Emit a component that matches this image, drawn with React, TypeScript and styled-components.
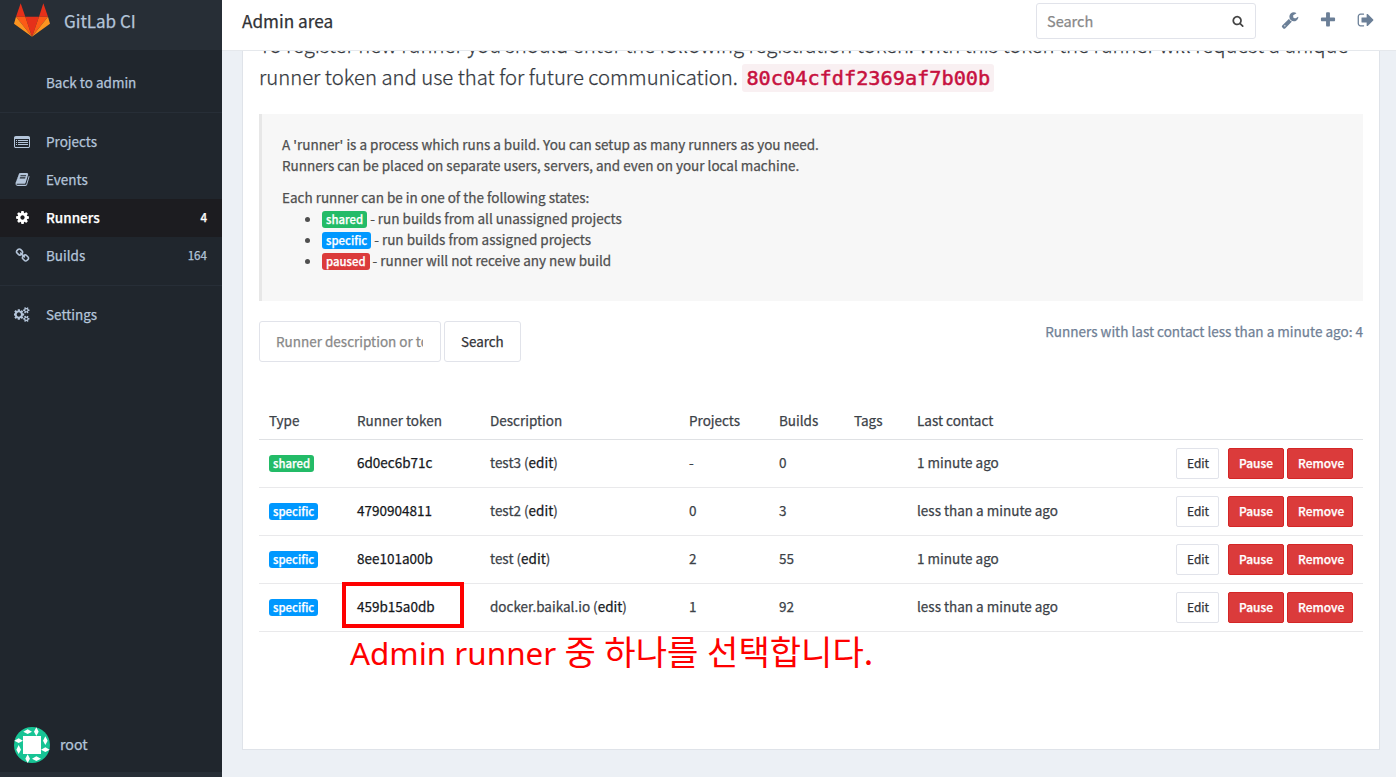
import React from 'react';
import styled, { createGlobalStyle, css } from 'styled-components';

const sans = `'Noto Sans CJK KR', 'Noto Sans', sans-serif`;

const GlobalStyle = createGlobalStyle`
  *, *::before, *::after { box-sizing: border-box; }
  html, body { margin: 0; padding: 0; }
  body {
    background: #ecf0f5;
    color: #3c4248;
    font-family: ${sans};
    font-size: 13.5px;
    line-height: 21px;
    -webkit-text-stroke-width: 0.25px;
    overflow: hidden;
  }
  a { color: inherit; text-decoration: none; }
`;

const Page = styled.div`
  display: flex;
  position: relative;
  width: 1396px;
  height: 777px;
  overflow: hidden;
`;

/* ---------- sidebar ---------- */

const Sidebar = styled.aside`
  display: flex;
  flex-direction: column;
  flex: none;
  width: 222px;
  height: 777px;
  background: #20262d;
  color: #b4c5da;
`;

const Brand = styled.a`
  display: flex;
  align-items: flex-start;
  height: 50px;
  padding: 3px 14px 0;
  gap: 14px;
  background: #272e36;
  font-size: 17px;
  line-height: 36px;
`;

const Menu = styled.ul`
  flex: 1;
  margin: 0;
  padding: 14px 0 0;
  list-style: none;
`;

const MenuLink = styled.a<{ $active?: boolean }>`
  display: flex;
  align-items: center;
  height: 38px;
  padding: 0 15px 0 13px;
  ${(p) =>
    p.$active &&
    css`
      background: #1c1c20;
      color: #fff;
      font-weight: 500;
    `}
`;

const MenuIcon = styled.span`
  display: flex;
  justify-content: center;
  flex: none;
  width: 18px;
  margin-right: 15px;
  padding-bottom: 1px;
`;

const MenuText = styled.span`
  padding-bottom: 2px;
`;

const Count = styled(MenuText)`
  margin-left: auto;
  font-size: 11.6px;
`;

const Separator = styled.li`
  height: 1px;
  margin: 10px 0;
  background: #272e37;
`;

const User = styled.a`
  display: flex;
  align-items: center;
  gap: 10px;
  height: 45px;
  padding: 0 14px 9px;
  font-size: 14.2px;
`;

const CollapseBar = styled.div`
  height: 5px;
  background: #272e36;
`;

/* ---------- main ---------- */

const Main = styled.div`
  flex: 1;
  display: flex;
  flex-direction: column;
  min-width: 0;
`;

const TopBar = styled.header`
  display: flex;
  align-items: flex-start;
  flex: none;
  height: 51px;
  padding: 3px 21px 0 20px;
  background: #fff;
  border-bottom: 1px solid #e5e8ec;
`;

const Title = styled.h1`
  margin: 0;
  font-size: 17.2px;
  line-height: 36px;
  font-weight: 400;
  color: #313236;
`;

const SearchBox = styled.div`
  display: flex;
  align-items: center;
  justify-content: space-between;
  width: 220px;
  height: 36px;
  margin: 0 25px 0 auto;
  padding: 0 11px 1px 10px;
  border: 1px solid #e1e3ea;
  border-radius: 3px;
  color: #888;
  font-size: 14.5px;
`;

const SearchGlyph = styled.span`
  display: flex;
  color: #444;
`;

const TopActions = styled.nav`
  display: flex;
  gap: 20px;
  padding-top: 8px;
  color: #6b7f97;
`;

const Viewport = styled.div`
  flex: 1;
  min-height: 0;
  padding: 0 16px 27px 20px;
  overflow: hidden;
`;

const Card = styled.section`
  display: flow-root;
  height: 699px;
  padding: 0 16px;
  background: #fff;
  border: 1px solid #dfe3e9;
  border-top: 0;
`;

const Lead = styled.p`
  margin: -22px 0 20px;
  font-size: 20.28px;
  line-height: 31.5px;
  font-weight: 300;
  color: #34383e;
  white-space: nowrap;
`;

const LeadLine = styled.span`
  display: block;
`;

const Code = styled.code`
  padding: 2px 4px;
  border-radius: 3px;
  background: #f9f0f2;
  color: #c7113f;
  font-family: 'DejaVu Sans Mono', monospace;
  font-size: 20.25px;
  font-weight: 400;
  -webkit-text-stroke-width: 0.5px;
`;

const Callout = styled.div`
  height: 187px;
  padding: 20px;
  border-left: 3px solid #e7e7e7;
  background: #f7f7f7;
  color: #4f4f4f;
`;

const Paragraph = styled.p`
  margin: 0 0 11px;
`;

const States = styled.ul`
  margin: 0;
  padding-left: 40px;
`;

type Kind = 'shared' | 'specific' | 'paused';
const kindColor: Record<Kind, string> = {
  shared: '#23bb67',
  specific: '#0098ff',
  paused: '#db3b3b',
};

const Label = styled.span<{ $kind: Kind }>`
  display: inline-block;
  height: 17px;
  padding: 0 4px;
  border-radius: 3px;
  background: ${(p) => kindColor[p.$kind]};
  color: #fff;
  font-size: 11.35px;
  font-weight: 500;
  line-height: 16.5px;
`;

const Toolbar = styled.div`
  display: flex;
  align-items: flex-start;
  height: 41px;
  margin: 20px 0 40px;
`;

const FilterInput = styled.input`
  width: 182px;
  height: 41px;
  margin: 0 3px 0 0;
  padding: 0 17px 2px 16px;
  border: 1px solid #e1e3ea;
  border-radius: 3px;
  font: inherit;
  -webkit-text-stroke-width: inherit;
  &::placeholder { color: #888; opacity: 1; }
`;

const Button = styled.button<{ $size?: 'small'; $danger?: boolean }>`
  height: ${(p) => (p.$size ? '31px' : '41px')};
  padding: 0 ${(p) => (p.$size ? '10px 2px' : '16px 2px')};
  border: 1px solid ${(p) => (p.$danger ? '#d42626' : '#e1e3ea')};
  border-radius: ${(p) => (p.$size ? '2px' : '3px')};
  background: ${(p) => (p.$danger ? '#db3b3b' : '#fff')};
  color: ${(p) => (p.$danger ? '#fff' : '#313236')};
  font-family: inherit;
  font-size: ${(p) => (p.$size ? '11.95px' : '13.4px')};
  font-weight: ${(p) => (p.$danger ? 500 : 400)};
  white-space: nowrap;
`;

const Contacted = styled.div`
  margin-left: auto;
  font-size: 13.54px;
  color: #6f8095;
`;

const Table = styled.table`
  width: 1104px;
  table-layout: fixed;
  border-collapse: separate;
  border-spacing: 0;
  th, td {
    padding: 0 10px;
    text-align: left;
    font-weight: 400;
    white-space: nowrap;
    vertical-align: middle;
  }
  th {
    height: 38px;
    border-bottom: 1px solid #dfe1e4;
  }
  td {
    height: 48px;
    padding-bottom: 2px;
    border-bottom: 1px solid #e9e9eb;
  }
  td:last-child { padding-bottom: 0; }
`;

const Token = styled.a`
  color: #15181c;
`;

const RowActions = styled.div`
  display: grid;
  grid-template-columns: 49px 56px 66px;
  column-gap: 3px;
  & > button:first-child { width: 43px; }
`;

/* ---------- annotation over the page ---------- */

const Highlight = styled.div`
  position: absolute;
  left: 342px;
  top: 582px;
  width: 122px;
  height: 46px;
  border: 4px solid #fe0000;
`;

const Note = styled.div`
  position: absolute;
  left: 350px;
  top: 628px;
  color: #fe0000;
  font-family: 'Noto Sans', 'Noto Sans CJK KR', sans-serif;
  font-size: 31.4px;
  line-height: 44px;
  white-space: nowrap;
  -webkit-text-stroke-width: 0;
`;

const NoteKorean = styled.span`
  font-family: 'Noto Sans CJK KR', sans-serif;
  font-size: 34.1px;
  word-spacing: 1px;
`;

/* ---------- icons ---------- */

const glyphs = {
  cog: 'M1152 896q0-106-75-181t-181-75-181 75-75 181 75 181 181 75 181-75 75-181zm512-109v222q0 12-8 23t-20 13l-185 28q-19 54-39 91 35 50 107 138 10 12 10 25t-9 23q-27 37-99 108t-94 71q-12 0-26-9l-138-108q-44 23-91 38-16 136-29 186-7 28-36 28h-222q-14 0-24.5-8.5t-11.5-21.5l-28-184q-49-16-90-37l-141 107q-10 9-25 9-14 0-25-11-126-114-165-168-7-10-7-23 0-12 8-23 15-21 51-66.5t54-70.5q-27-50-41-99l-183-27q-13-2-21-12.5t-8-23.5v-222q0-12 8-23t19-13l186-28q14-46 39-92-40-57-107-138-10-12-10-24 0-10 9-23 26-36 98.5-107.5t94.5-71.5q13 0 26 10l138 107q44-23 91-38 16-136 29-186 7-28 36-28h222q14 0 24.5 8.5t11.5 21.5l28 184q49 16 90 37l142-107q9-9 24-9 13 0 25 10 129 119 165 170 7 8 7 22 0 12-8 23-15 21-51 66.5t-54 70.5q26 50 41 98l183 28q13 2 21 12.5t8 23.5z',
  cogs: 'M832 896q0-106-75-181t-181-75-181 75-75 181 75 181 181 75 181-75 75-181zm768 512q0-52-38-90t-90-38-90 38-38 90q0 53 37.5 90.5t90.5 37.5 90.5-37.5 37.5-90.5zm0-1024q0-52-38-90t-90-38-90 38-38 90q0 53 37.5 90.5t90.5 37.5 90.5-37.5 37.5-90.5zm-384 421v185q0 10-7 19.5t-16 10.5l-155 24q-11 35-32 76 34 48 90 115 7 11 7 20 0 12-7 19-23 30-82.5 89.5t-78.5 59.5q-11 0-21-7l-115-90q-37 19-77 31-11 108-23 155-7 24-30 24h-186q-11 0-20-7.5t-10-17.5l-23-153q-34-10-75-31l-118 89q-7 7-20 7-11 0-21-8-144-133-144-160 0-9 7-19 10-14 41-53t47-61q-23-44-35-82l-152-24q-10-1-17-9.5t-7-19.5v-185q0-10 7-19.5t16-10.5l155-24q11-35 32-76-34-48-90-115-7-11-7-20 0-12 7-20 22-30 82-89t79-59q11 0 21 7l115 90q34-18 77-32 11-108 23-154 7-24 30-24h186q11 0 20 7.5t10 17.5l23 153q34 10 75 31l118-89q8-7 20-7 11 0 21 8 144 133 144 160 0 8-7 19-12 16-42 54t-45 60q23 48 34 82l152 23q10 2 17 10.5t7 19.5zm640 533v140q0 16-149 31-12 27-30 52 51 113 51 138 0 4-4 7-122 71-124 71-8 0-46-47t-52-68q-20 2-30 2t-30-2q-14 21-52 68t-46 47q-2 0-124-71-4-3-4-7 0-25 51-138-18-25-30-52-149-15-149-31v-140q0-16 149-31 13-29 30-52-51-113-51-138 0-4 4-7 4-2 35-20t59-34 30-16q8 0 46 46.5t52 67.5q20-2 30-2t30 2q51-71 92-112l6-2q4 0 124 70 4 3 4 7 0 25-51 138 17 23 30 52 149 15 149 31zm0-1024v140q0 16-149 31-12 27-30 52 51 113 51 138 0 4-4 7-122 71-124 71-8 0-46-47t-52-68q-20 2-30 2t-30-2q-14 21-52 68t-46 47q-2 0-124-71-4-3-4-7 0-25 51-138-18-25-30-52-149-15-149-31v-140q0-16 149-31 13-29 30-52-51-113-51-138 0-4 4-7 4-2 35-20t59-34 30-16q8 0 46 46.5t52 67.5q20-2 30-2t30 2q51-71 92-112l6-2q4 0 124 70 4 3 4 7 0 25-51 138 17 23 30 52 149 15 149 31z',
  wrench:
    'M448 1472q0-26-19-45t-45-19-45 19-19 45 19 45 45 19 45-19 19-45zm644-420l-682 682q-37 37-90 37-52 0-91-37l-106-108q-38-36-38-90 0-53 38-91l681-681q39 98 114.5 173.5t173.5 114.5zm634-435q0 39-23 106-47 134-164.5 217.5t-258.5 83.5q-185 0-316.5-131.5t-131.5-316.5 131.5-316.5 316.5-131.5q58 0 121.5 16.5t107.5 46.5q16 11 16 28t-16 28l-293 169v224l193 107q5-3 79-48.5t135.5-81 70.5-35.5q15 0 23.5 10t8.5 25z',
  plus: 'M1600 736v192q0 40-28 68t-68 28h-416v416q0 40-28 68t-68 28h-192q-40 0-68-28t-28-68v-416h-416q-40 0-68-28t-28-68v-192q0-40 28-68t68-28h416v-416q0-40 28-68t68-28h192q40 0 68 28t28 68v416h416q40 0 68 28t28 68z',
  signOut:
    'M704 1440q0 4 1 20t.5 26.5-3 23.5-10 19.5-20.5 6.5h-320q-119 0-203.5-84.5t-84.5-203.5v-704q0-119 84.5-203.5t203.5-84.5h320q13 0 22.5 9.5t9.5 22.5q0 4 1 20t.5 26.5-3 23.5-10 19.5-20.5 6.5h-320q-66 0-113 47t-47 113v704q0 66 47 113t113 47h312l11.5 1 11.5 3 8 5.5 7 9 2 13.5zm928-544q0 26-19 45l-544 544q-19 19-45 19t-45-19-19-45v-288h-448q-26 0-45-19t-19-45v-384q0-26 19-45t45-19h448v-288q0-26 19-45t45-19 45 19l544 544q19 19 19 45z',
  search:
    'M1216 832q0-185-131.5-316.5t-316.5-131.5-316.5 131.5-131.5 316.5 131.5 316.5 316.5 131.5 316.5-131.5 131.5-316.5zm512 832q0 52-38 90t-90 38q-54 0-90-38l-343-342q-179 124-399 124-143 0-273.5-55.5t-225-150-150-225-55.5-273.5 55.5-273.5 150-225 225-150 273.5-55.5 273.5 55.5 225 150 150 225 55.5 273.5q0 220-124 399l343 343q37 37 37 90z',
  book: 'M1703 478q40 57 18 129l-275 906q-19 64-76.5 107.5t-122.5 43.5h-923q-77 0-148.5-53.5t-99.5-131.5q-24-67-2-127 0-4 3-27t4-37q1-8-3-21.5t-3-19.5q2-11 8-21t16.5-23.5 16.5-23.5q23-38 45-91.5t30-91.5q3-10 .5-30t-.5-28q3-11 17-28t17-23q21-36 42-92t25-90q1-9-2.5-32t.5-28q4-13 22-30.5t22-22.5q19-26 42.5-84.5t27.5-96.5q1-8-3-25.5t-2-26.5q2-8 9-18t18-23 17-21q8-12 16.5-30.5t15-35 16-36 19.5-32 26.5-23.5 36-11.5 47.5 5.5l-1 3q38-9 51-9h761q74 0 114 56t18 130l-274 906q-36 119-71.5 153.5t-128.5 34.5h-869q-27 0-38 15-11 16-1 43 24 70 144 70h923q29 0 56-15.5t35-41.5l300-987q7-22 5-57 38 15 59 43zm-1064 2q-4 13 2 22.5t20 9.5h608q13 0 25.5-9.5t16.5-22.5l21-64q4-13-2-22.5t-20-9.5h-608q-13 0-25.5 9.5t-16.5 22.5zm-83 256q-4 13 2 22.5t20 9.5h608q13 0 25.5-9.5t16.5-22.5l21-64q4-13-2-22.5t-20-9.5h-608q-13 0-25.5 9.5t-16.5 22.5z',
  link: 'M1520 1216q0-40-28-68l-208-208q-28-28-68-28-42 0-72 32 3 3 19 18.5t21.5 21.5 15 19 13 25.5 3.5 27.5q0 40-28 68t-68 28q-15 0-27.5-3.5t-25.5-13-19-15-21.5-21.5-18.5-19q-33 31-33 73 0 40 28 68l206 207q27 27 68 27 40 0 68-26l147-146q28-28 28-67zm-703-705q0-40-28-68l-206-207q-28-28-68-28-39 0-68 27l-147 146q-28 28-28 67 0 40 28 68l208 208q27 27 68 27 42 0 72-31-3-3-19-18.5t-21.5-21.5-15-19-13-25.5-3.5-27.5q0-40 28-68t68-28q15 0 27.5 3.5t25.5 13 19 15 21.5 21.5 18.5 19q33-31 33-73zm895 705q0 120-85 203l-147 146q-83 83-203 83-121 0-204-85l-206-207q-83-83-83-203 0-123 88-209l-88-88q-86 88-208 88-120 0-204-84l-208-208q-84-84-84-204t85-203l147-146q83-83 203-83 121 0 204 85l206 207q83 83 83 203 0 123-88 209l88 88q86-88 208-88 120 0 204 84l208 208q84 84 84 204z',
  list: 'M224 128h1600q93 0 158.500 65.500t65.500 158.500v1088q0 93-65.500 158.500t-158.500 65.500h-1600q-93 0-158.500-65.500t-65.500-158.500v-1088q0-93 65.500-158.500t158.500-65.500zM128 512v928q0 40 28 68t68 28h1600q40 0 68-28t28-68v-928zM256 640h128v128h-128zM256 896h128v128h-128zM256 1152h128v128h-128zM512 640h1280v128h-1280zM512 896h1280v128h-1280zM512 1152h1280v128h-1280z',
};
type Glyph = keyof typeof glyphs;
const glyphWidth: Partial<Record<Glyph, number>> = { cogs: 1920, list: 2048 };

const Icon = ({ name, size = 14 }: { name: Glyph; size?: number }) => {
  const w = glyphWidth[name] ?? 1792;
  return (
    <svg
      width={(size * w) / 1792}
      height={size}
      viewBox={`0 0 ${w} 1792`}
      fill="currentColor"
      fillRule={name === 'list' ? 'evenodd' : 'nonzero'}
      aria-hidden="true"
    >
      <path d={glyphs[name]} />
    </svg>
  );
};

const Tanuki = () => (
  <svg width="36" height="34" viewBox="0 0 108 102" aria-hidden="true">
    <path fill="#e5301a" d="M20 1 34 41H6ZM88 1 102 41H75ZM34 41H75L54 101Z" />
    <path fill="#fc5a16" d="M6 41H34L54 101ZM102 41H75L54 101Z" />
    <path fill="#fd9420" d="M6 41 0 62 54 101ZM102 41 108 62 54 101Z" />
  </svg>
);

const Identicon = () => (
  <svg width="36" height="36" viewBox="0 0 108 108" aria-hidden="true">
    <circle cx="54" cy="54" r="54" fill="#17c495" />
    <g fill="#fff">
      <path d="M27 27H81V81H27Z" />
      <path d="M28 14 41 7 54 14 41 21ZM54 95 67 88 81 95 67 102ZM1 41 14 34 27 41 14 48ZM81 68 94 61 107 68 94 75Z" />
      <path d="M67 1 74 14 67 27 60 14ZM41 82 48 95 41 108 34 95ZM94 28 101 41 94 54 87 41ZM14 54 21 68 14 81 7 68Z" />
    </g>
  </svg>
);

/* ---------- data ---------- */

const runners: {
  kind: Kind; token: string; name: string; projects: string; builds: number; contact: string;
}[] = [
  { kind: 'shared', token: '6d0ec6b71c', name: 'test3', projects: '-', builds: 0, contact: '1 minute ago' },
  { kind: 'specific', token: '4790904811', name: 'test2', projects: '0', builds: 3, contact: 'less than a minute ago' },
  { kind: 'specific', token: '8ee101a00b', name: 'test', projects: '2', builds: 55, contact: '1 minute ago' },
  { kind: 'specific', token: '459b15a0db', name: 'docker.baikal.io', projects: '1', builds: 92, contact: 'less than a minute ago' },
];

const MenuItem = ({ icon, label, count, active }: {
  icon?: Glyph; label: string; count?: number; active?: boolean;
}) => (
  <li>
    <MenuLink href="#" $active={active}>
      <MenuIcon>{icon && <Icon name={icon} size={icon === 'list' ? 14 : 15} />}</MenuIcon>
      <MenuText>{label}</MenuText>
      {count !== undefined && <Count>{count}</Count>}
    </MenuLink>
  </li>
);

export default function App() {
  return (
    <>
      <GlobalStyle />
      <Page>
        <Sidebar>
          <Brand href="#">
            <Tanuki />
            GitLab CI
          </Brand>
          <Menu>
            <MenuItem label="Back to admin" />
            <Separator />
            <MenuItem icon="list" label="Projects" />
            <MenuItem icon="book" label="Events" />
            <MenuItem icon="cog" label="Runners" count={4} active />
            <MenuItem icon="link" label="Builds" count={164} />
            <Separator />
            <MenuItem icon="cogs" label="Settings" />
          </Menu>
          <User href="#">
            <Identicon />
            <MenuText>root</MenuText>
          </User>
          <CollapseBar />
        </Sidebar>

        <Main>
          <TopBar>
            <Title>Admin area</Title>
            <SearchBox>
              Search
              <SearchGlyph><Icon name="search" size={12} /></SearchGlyph>
            </SearchBox>
            <TopActions>
              <Icon name="wrench" size={18} />
              <Icon name="plus" size={18} />
              <Icon name="signOut" size={18} />
            </TopActions>
          </TopBar>

          <Viewport>
            <Card>
              <Lead>
                <LeadLine>
                  To register new runner you should enter the following registration token. With this token the runner will request a unique
                </LeadLine>
                <LeadLine>
                  runner token and use that for future communication. <Code>80c04cfdf2369af7b00b</Code>
                </LeadLine>
              </Lead>

              <Callout>
                <Paragraph>
                  A 'runner' is a process which runs a build. You can setup as many runners as you need.
                  <br />
                  Runners can be placed on separate users, servers, and even on your local machine.
                </Paragraph>
                <div>Each runner can be in one of the following states:</div>
                <States>
                  <li><Label $kind="shared">shared</Label> - run builds from all unassigned projects</li>
                  <li><Label $kind="specific">specific</Label> - run builds from assigned projects</li>
                  <li><Label $kind="paused">paused</Label> - runner will not receive any new build</li>
                </States>
              </Callout>

              <Toolbar>
                <FilterInput placeholder="Runner description or token" />
                <Button>Search</Button>
                <Contacted>Runners with last contact less than a minute ago: 4</Contacted>
              </Toolbar>

              <Table>
                <colgroup>
                  {[88, 133, 199, 90, 75, 63, 259, 197].map((w, i) => (
                    <col key={i} width={w} />
                  ))}
                </colgroup>
                <thead>
                  <tr>
                    <th>Type</th>
                    <th>Runner token</th>
                    <th>Description</th>
                    <th>Projects</th>
                    <th>Builds</th>
                    <th>Tags</th>
                    <th>Last contact</th>
                    <th />
                  </tr>
                </thead>
                <tbody>
                  {runners.map((r) => (
                    <tr key={r.token}>
                      <td><Label $kind={r.kind}>{r.kind}</Label></td>
                      <td><Token href="#">{r.token}</Token></td>
                      <td>{r.name} (<Token href="#">edit</Token>)</td>
                      <td>{r.projects}</td>
                      <td>{r.builds}</td>
                      <td />
                      <td>{r.contact}</td>
                      <td>
                        <RowActions>
                          <Button $size="small">Edit</Button>
                          <Button $size="small" $danger>Pause</Button>
                          <Button $size="small" $danger>Remove</Button>
                        </RowActions>
                      </td>
                    </tr>
                  ))}
                </tbody>
              </Table>
            </Card>
          </Viewport>
        </Main>

        <Highlight />
        <Note>Admin runner <NoteKorean>중 하나를 선택합니다.</NoteKorean></Note>
      </Page>
    </>
  );
}
